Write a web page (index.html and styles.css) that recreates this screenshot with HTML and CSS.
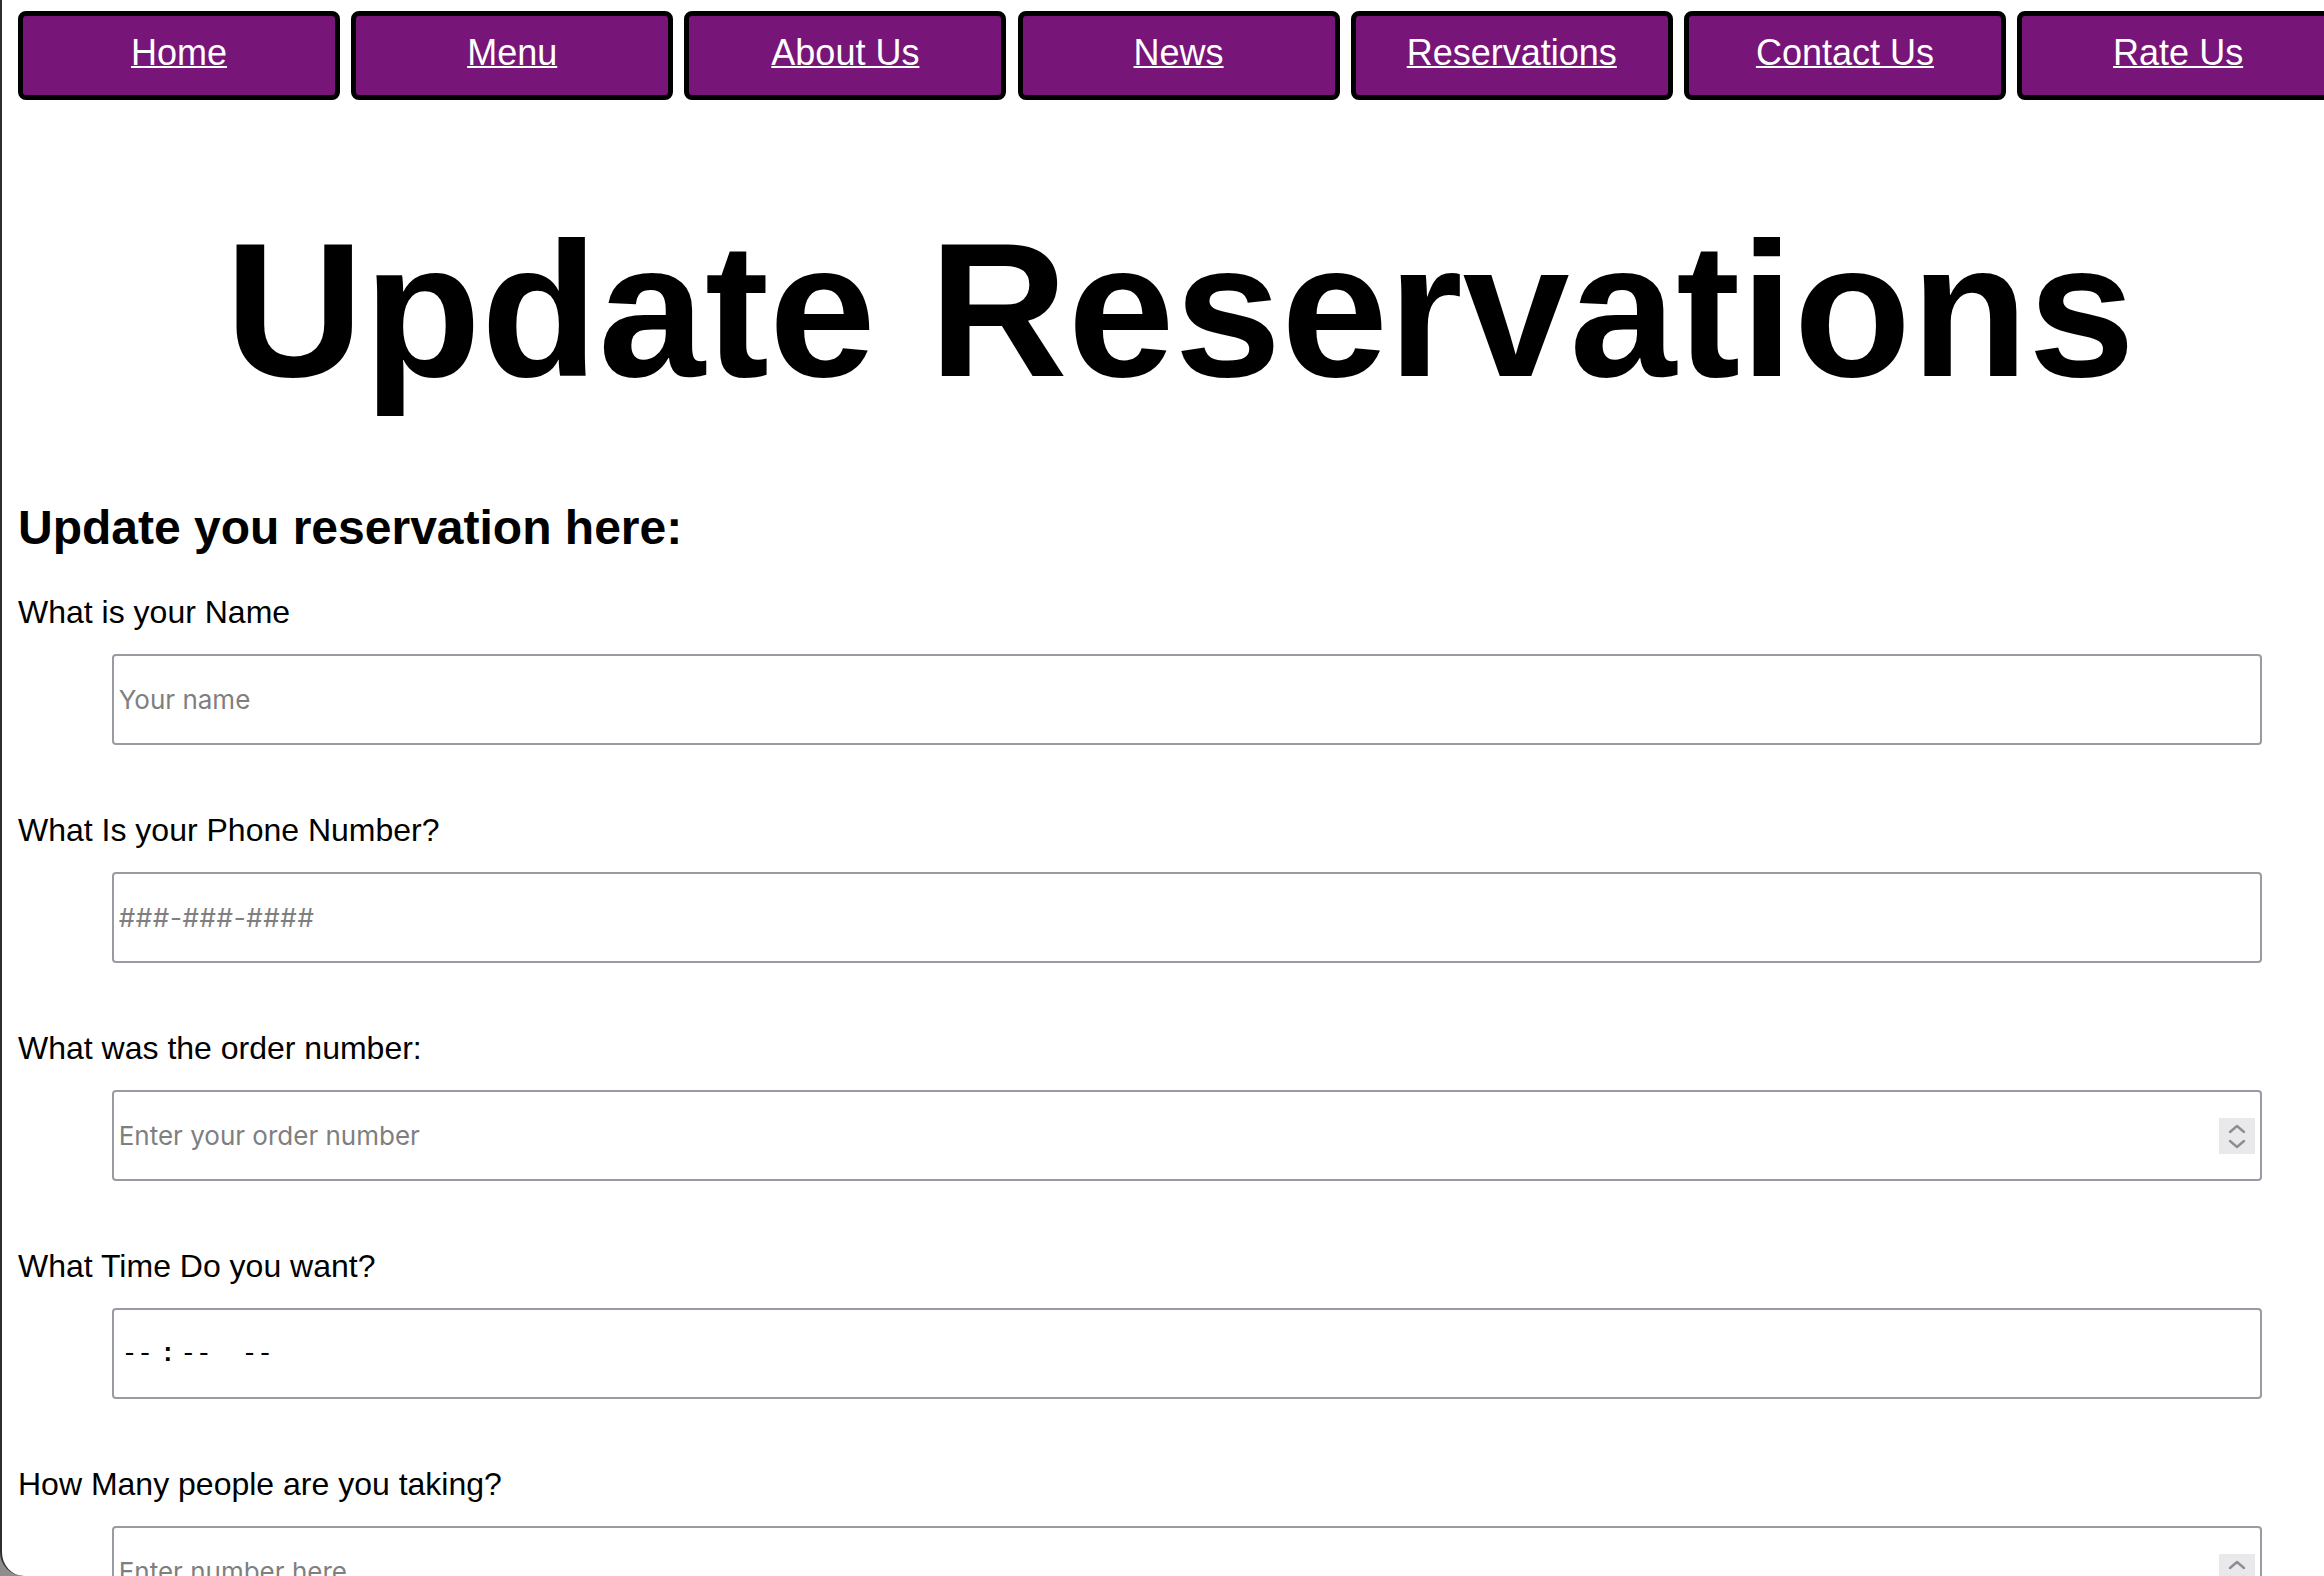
FILE: index.html
```html
<!DOCTYPE html>
<html lang="en">
<head>
<meta charset="utf-8">
<title>Update Reservations</title>
<link rel="stylesheet" href="styles.css">
</head>
<body>
<div class="window">
  <div class="page">
    <nav class="nav">
      <div class="nav-item"><a class="nav-link" href="#">Home</a></div>
      <div class="nav-item"><a class="nav-link" href="#">Menu</a></div>
      <div class="nav-item"><a class="nav-link" href="#">About Us</a></div>
      <div class="nav-item"><a class="nav-link" href="#">News</a></div>
      <div class="nav-item"><a class="nav-link" href="#">Reservations</a></div>
      <div class="nav-item"><a class="nav-link" href="#">Contact Us</a></div>
      <div class="nav-item"><a class="nav-link" href="#">Rate Us</a></div>
    </nav>

    <h1 class="title">Update Reservations</h1>
    <h2 class="subtitle">Update you reservation here:</h2>

    <form class="form">
      <div class="group">
        <label class="label" for="name">What is your Name</label>
        <div class="field"><input class="control" id="name" type="text" placeholder="Your name"></div>
      </div>
      <div class="group">
        <label class="label" for="phone">What Is your Phone Number?</label>
        <div class="field"><input class="control phone" id="phone" type="text" placeholder="###-###-####"></div>
      </div>
      <div class="group">
        <label class="label" for="order">What was the order number:</label>
        <div class="field">
          <input class="control" id="order" type="text" placeholder="Enter your order number">
          <span class="spinner"><svg width="36" height="36" viewBox="0 0 36 36"><path d="M11 14 L18 8 L25 14 M11 23 L18 29 L25 23" fill="none" stroke="#8d8d96" stroke-width="2.4" stroke-linecap="round" stroke-linejoin="round"/></svg></span>
        </div>
      </div>
      <div class="group">
        <label class="label" for="time">What Time Do you want?</label>
        <div class="field time" id="time">
          <span class="t-seg">--</span><span class="t-colon">:</span><span class="t-min">--</span><span class="t-ampm">--</span>
        </div>
      </div>
      <div class="group">
        <label class="label" for="people">How Many people are you taking?</label>
        <div class="field">
          <input class="control" id="people" type="text" placeholder="Enter number here">
          <span class="spinner"><svg width="36" height="36" viewBox="0 0 36 36"><path d="M11 14 L18 8 L25 14 M11 23 L18 29 L25 23" fill="none" stroke="#8d8d96" stroke-width="2.4" stroke-linecap="round" stroke-linejoin="round"/></svg></span>
        </div>
      </div>
    </form>
  </div>
</div>
</body>
</html>
```
FILE: styles.css
```css
html, body {
  margin: 0;
  padding: 0;
  background: #8e8e8e;
  overflow: hidden;
}

.window {
  height: 1576px;
  box-sizing: border-box;
  background: #ffffff;
  border-left: 2px solid #2e2e2e;
  border-bottom-left-radius: 24px;
  overflow: hidden;
  padding: 11px 0 0 16px;
}

.page {
  width: 2324px;
  font-family: "Liberation Sans", Arial, Helvetica, sans-serif;
  color: #000;
}

/* navigation */
.nav {
  display: flex;
  gap: 11.2px;
}

.nav-item {
  flex: 0 0 322px;
  box-sizing: border-box;
  height: 89px;
  border: 5px solid #000;
  border-radius: 8px;
  background: #771579;
  text-align: center;
  padding-top: 16px;
}

.nav-link {
  color: #ffffff;
  font-size: 36px;
  line-height: 41px;
  text-decoration: underline;
  text-decoration-thickness: 2px;
}

/* headings */
.title {
  margin: 100px 0 0;
  font-size: 192px;
  line-height: 220px;
  font-weight: 700;
  text-align: center;
}

.subtitle {
  margin: 80px 0 0;
  font-size: 48px;
  line-height: 55px;
  font-weight: 700;
}

/* form */
.form {
  margin-top: 39px;
}

.group {
  display: flex;
  flex-direction: column;
  align-items: flex-start;
  margin-bottom: 67px;
}

.label {
  font-size: 32px;
  line-height: 37px;
}

.field {
  margin: 23px 0 0 93.7px;
  width: 2150px;
  height: 91px;
  box-sizing: border-box;
  border: 2px solid #9a9aa3;
  border-radius: 4px;
  display: flex;
  align-items: center;
  background: #fff;
}

.control {
  flex: 1;
  height: 100%;
  border: none;
  outline: none;
  background: transparent;
  padding: 0 0 0 5px;
  margin: 0;
  font-family: Inter, "Liberation Sans", sans-serif;
  font-size: 26px;
  color: #000;
}

.control.phone {
  letter-spacing: 0.6px;
}

.control::placeholder {
  color: #7f7f7f;
}

.spinner {
  flex: 0 0 36px;
  height: 36px;
  margin-right: 5px;
  background: #e9e9ec;
  display: flex;
  align-items: center;
  justify-content: center;
}

.spinner svg {
  display: block;
}

/* time field */
.time {
  padding-left: 8px;
  font-family: "Liberation Mono", "DejaVu Sans Mono", monospace;
  font-size: 26px;
  color: #000;
}

.t-colon {
  margin-left: 7px;
  font-weight: 700;
}

.t-min {
  margin-left: 5px;
}

.t-ampm {
  margin-left: 30px;
}
```
